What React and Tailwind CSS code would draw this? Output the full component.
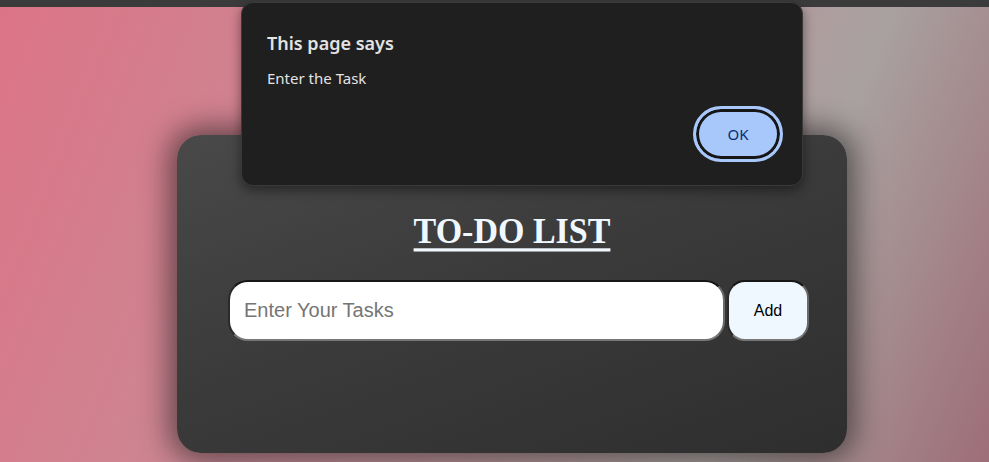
import { useState } from "react";

const AlertDialog = ({ message, onClose }) => {
    return (
        <div className="absolute left-[241px] top-[2px] w-[562px] h-[184px] rounded-[12px] border border-[#3a3a3a] bg-[#1f1f1f] shadow-[0_4px_12px_rgba(0,0,0,0.45)] font-['Noto_Sans',sans-serif] flex flex-col">
            <div className="pl-[25px] pt-[28px]">
                <h2 className="text-[18px] leading-[24px] font-semibold text-[#e3e3e3]">This page says</h2>
                <p className="mt-[13px] text-[15px] leading-[20px] text-[#e3e3e3]">{message}</p>
            </div>
            <div className="flex justify-end pr-[19px] mt-[18px]">
                <button
                    className="w-[90px] h-[56px] rounded-full border-[3px] border-[#a8c7fa] bg-[#a8c7fa] shadow-[inset_0_0_0_3px_#161616] text-[15px] text-[#062e6f]"
                    onClick={onClose}
                >
                    OK
                </button>
            </div>
        </div>
    );
};

const App = () => {
    const [task, setTask] = useState("");
    const [showAlert, setShowAlert] = useState(true);

    const addTask = () => {
        if (task.trim() === "") {
            setShowAlert(true);
        }
    };

    return (
        <div className="relative w-[989px] h-[462px] overflow-hidden flex flex-col">
            {/* browser strip */}
            <div className="h-[7px] bg-[#3b3b3b]"></div>

            {/* Page */}
            <div className="flex-1 bg-[linear-gradient(112deg,#dc7487_0%,#cf8390_25%,#b8959a_58%,#a9a1a0_76%,#9e6e77_100%)]">
                <div className="ml-[177px] mt-[128px] w-[670px] h-[318px] rounded-[24px] bg-[linear-gradient(160deg,#4a4949_0%,#3c3b3c_45%,#2f2e2f_100%)] shadow-[0_0_28px_8px_rgba(20,20,20,0.55)] pt-[77px]">
                    <h1 className="text-center font-['Liberation_Serif',serif] font-bold text-[34px] leading-[38px] text-[#f0f8ff] underline decoration-[3px] underline-offset-[5px] scale-y-[1.08]">
                        TO-DO LIST
                    </h1>
                    <div className="flex gap-[2px] mt-[30px] pl-[51px]">
                        <input
                            type="text"
                            placeholder="Enter Your Tasks"
                            value={task}
                            onChange={(e) => setTask(e.target.value)}
                            className="w-[497px] h-[61px] rounded-[20px] border-2 border-t-[#161616] border-l-[#2a2a2a] border-b-[#777777] border-r-[#6a6a6a] bg-white pl-[14px] font-['Liberation_Sans',Arial,sans-serif] text-[20px] text-black placeholder:text-[#757575] outline-none"
                        />
                        <button
                            className="w-[82px] h-[61px] rounded-[18px] border-2 border-t-[#161616] border-l-[#2a2a2a] border-b-[#777777] border-r-[#6a6a6a] bg-[#f0f8ff] font-['Liberation_Sans',Arial,sans-serif] text-[16px] text-black"
                            onClick={addTask}
                        >
                            Add
                        </button>
                    </div>
                </div>
            </div>

            {showAlert && <AlertDialog message="Enter the Task" onClose={() => setShowAlert(false)} />}
        </div>
    );
};

export default App;
